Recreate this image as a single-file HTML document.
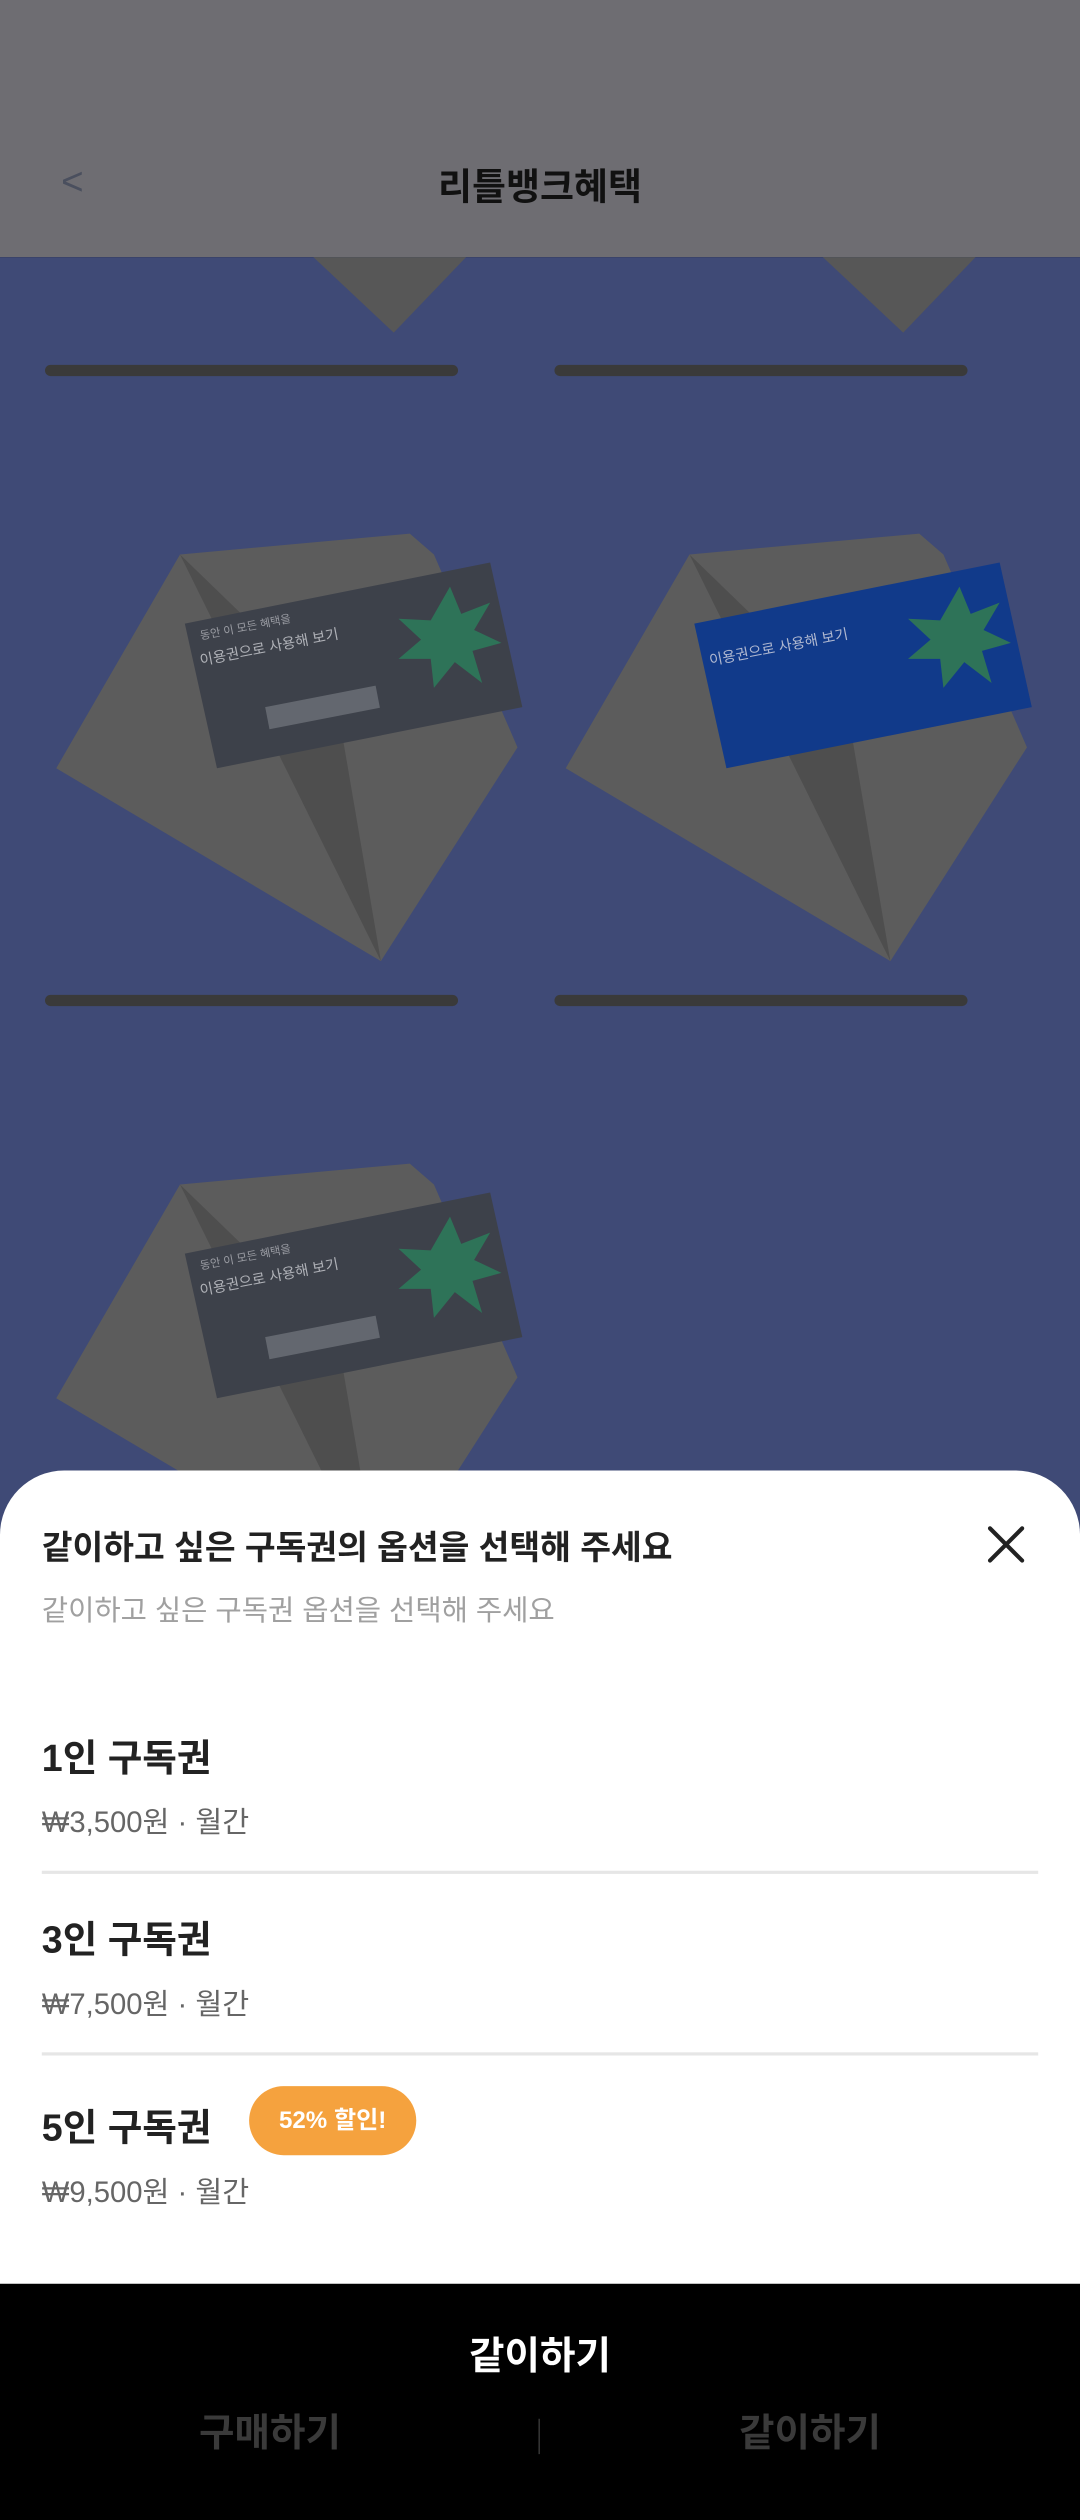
<!DOCTYPE html>
<html><head><meta charset="utf-8"><style>
*{margin:0;padding:0;box-sizing:border-box}
body{width:1080px;height:2520px;overflow:hidden;background:#000;font-family:"Liberation Sans","Noto Sans CJK KR",sans-serif}
#w{width:672px;height:1568px;transform:scale(1.60715);transform-origin:0 0;position:relative;overflow:hidden}
.a{position:absolute;white-space:nowrap}
</style></head><body><div id="w">
<svg class="a" style="left:0;top:0" width="672" height="1568" viewBox="0 0 672 1568">
<rect x="0" y="0" width="672" height="160" fill="#6e6d72"/>
<rect x="0" y="160" width="672" height="800" fill="#3f4a76"/>
<polygon points="195,160 290,160 245,207" fill="#575757"/>
<polygon points="512,160 607,160 562,207" fill="#575757"/>
<rect x="28" y="227" width="257" height="7" rx="3.5" fill="#3a3a3a"/>
<rect x="345" y="227" width="257" height="7" rx="3.5" fill="#3a3a3a"/>
<rect x="28" y="619" width="257" height="7" rx="3.5" fill="#3a3a3a"/>
<rect x="345" y="619" width="257" height="7" rx="3.5" fill="#3a3a3a"/>
<g id="env">
<polygon points="35,478 112,345 255,332 270,345 322,465 237,598" fill="#5c5c5c"/>
<polygon points="112,345 237,598 210,440" fill="#4e4e4e"/>
<polygon points="115,388 305,350 325,440 135,478" fill="#3d414a"/>
<polygon points="280,365 287,382 305,375 295,392 312,400 294,405 300,425 283,412 270,428 268,410 248,410 262,398 248,385 268,386" fill="#2e7358"/>
<rect x="165" y="440" width="70" height="14" fill="#8a8d94" opacity=".5" transform="rotate(-11 165 440)"/>
<text x="125" y="398" font-size="7" fill="#9a9ca3" transform="rotate(-11 125 398)">동안 이 모든 혜택을</text>
<text x="125" y="414" font-size="9" fill="#b0b2b8" transform="rotate(-11 125 414)">이용권으로 사용해 보기</text>
</g>
<polygon points="352,478 429,345 572,332 587,345 639,465 554,598" fill="#5c5c5c"/>
<polygon points="429,345 554,598 527,440" fill="#4e4e4e"/>
<polygon points="432,388 622,350 642,440 452,478" fill="#113a8a"/>
<polygon points="597,365 604,382 622,375 612,392 629,400 611,405 617,425 600,412 587,428 585,410 565,410 579,398 565,385 585,386" fill="#2e7358"/>
<text x="442" y="414" font-size="9" fill="#b0b8d0" transform="rotate(-11 442 414)">이용권으로 사용해 보기</text>
<g transform="translate(0,392)"><use href="#env"/></g>
</svg>
<div class="a" style="left:38px;top:100px;color:#4a4f5e;font-size:24px">&lt;</div>
<div class="a" style="left:0;width:672px;text-align:center;top:97px;font-size:23px;font-weight:bold;color:#111">리틀뱅크혜택</div>
<div class="a" style="left:0;top:915px;width:672px;height:520px;background:#fff;border-radius:40px 40px 0 0"></div>
<div class="a" style="left:26px;top:946px;font-size:20.8px;font-weight:bold;color:#222">같이하고 싶은 구독권의 옵션을 선택해 주세요</div>
<svg class="a" style="left:613px;top:948px" width="26" height="26" viewBox="0 0 26 26"><path d="M3 3L23 23M23 3L3 23" stroke="#222" stroke-width="2.6" stroke-linecap="round"/></svg>
<div class="a" style="left:26px;top:988px;font-size:17.8px;color:#a0a0a0">같이하고 싶은 구독권 옵션을 선택해 주세요</div>
<div class="a" style="left:26px;top:1075px;font-size:23.4px;font-weight:bold;color:#222">1인 구독권</div>
<div class="a" style="left:26px;top:1120px;font-size:18.2px;color:#666">₩3,500원 · 월간</div>
<div class="a" style="left:26px;top:1164px;width:620px;height:2px;background:#e6e6e6"></div>
<div class="a" style="left:26px;top:1188px;font-size:23.4px;font-weight:bold;color:#222">3인 구독권</div>
<div class="a" style="left:26px;top:1233px;font-size:18.2px;color:#666">₩7,500원 · 월간</div>
<div class="a" style="left:26px;top:1277px;width:620px;height:2px;background:#e6e6e6"></div>
<div class="a" style="left:26px;top:1305px;font-size:23.4px;font-weight:bold;color:#222">5인 구독권</div>
<div class="a" style="left:155px;top:1298px;width:104px;height:43px;border-radius:22px;background:#f5a23e;color:#fff;font-size:15px;font-weight:bold;text-align:center;line-height:43px">52% 할인!</div>
<div class="a" style="left:26px;top:1350px;font-size:18.2px;color:#666">₩9,500원 · 월간</div>
<div class="a" style="left:0;top:1421px;width:672px;height:147px;background:#000"></div>
<div class="a" style="left:0;width:672px;text-align:center;top:1446px;font-size:24px;font-weight:bold;color:#fff">같이하기</div>
<div class="a" style="left:0;width:336px;text-align:center;top:1494px;font-size:24px;font-weight:bold;color:#3a3a3a">구매하기</div>
<div class="a" style="left:336px;width:336px;text-align:center;top:1494px;font-size:24px;font-weight:bold;color:#3a3a3a">같이하기</div>
<div class="a" style="left:335px;top:1505px;width:1px;height:22px;background:#333"></div>
</div></body></html>
